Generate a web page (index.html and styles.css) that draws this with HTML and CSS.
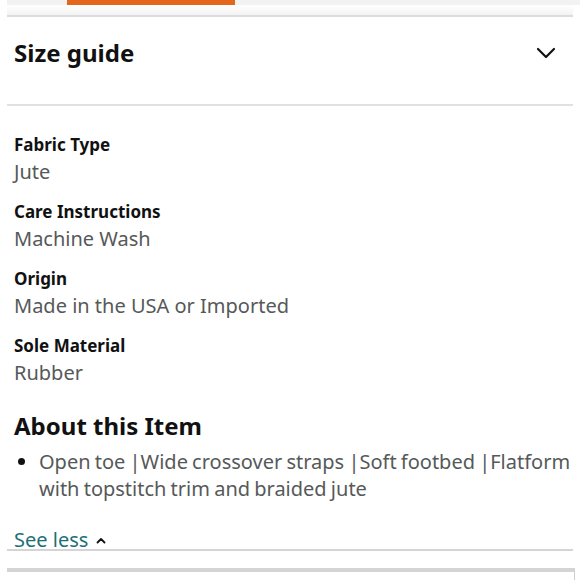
FILE: index.html
```html
<!DOCTYPE html>
<html>
<head>
<meta charset="utf-8">
<link rel="stylesheet" href="styles.css">
</head>
<body>
<div class="tabs">
  <div class="tab-active"></div>
</div>
<div class="top-rule"></div>
<div class="size-guide">
  <h2 class="sg-title">Size guide</h2>
  <svg class="chevron" width="20" height="12" viewBox="0 0 20 12"><path d="M2 2 L10 10 L18 2" fill="none" stroke="#111" stroke-width="2.2" stroke-linecap="round" stroke-linejoin="round"/></svg>
</div>
<div class="rule"></div>
<div class="specs">
  <div class="spec">
    <div class="spec-label">Fabric Type</div>
    <div class="spec-value">Jute</div>
  </div>
  <div class="spec">
    <div class="spec-label">Care Instructions</div>
    <div class="spec-value">Machine Wash</div>
  </div>
  <div class="spec">
    <div class="spec-label">Origin</div>
    <div class="spec-value">Made in the USA or Imported</div>
  </div>
  <div class="spec">
    <div class="spec-label">Sole Material</div>
    <div class="spec-value">Rubber</div>
  </div>
</div>
<h2 class="about-title">About this Item</h2>
<ul class="about-list">
  <li>Open toe |Wide crossover straps |Soft footbed |Flatform with topstitch trim and braided jute</li>
</ul>
<div class="see-less">See less <svg class="caret" width="10" height="7" viewBox="0 0 10 7"><path d="M1.5 5.5 L5 2 L8.5 5.5" fill="none" stroke="#111" stroke-width="1.8" stroke-linecap="round" stroke-linejoin="round"/></svg></div>
<div class="rule thin"></div>
<div class="next-card"></div>
</body>
</html>
```
FILE: styles.css
```css
html, body {
  margin: 0;
  padding: 0;
  background: #fff;
  width: 580px;
  height: 580px;
  overflow: hidden;
  font-family: "Noto Sans", "Open Sans", sans-serif;
  color: #111;
}
.tabs {
  height: 5px;
  background: #f2f2f2;
  margin-left: 7px;
  display: flex;
}
.tab-active {
  margin-left: 60px;
  width: 168px;
  height: 5px;
  background: #e3661c;
}
.top-rule {
  height: 12px;
  margin: 0 7px;
  background: linear-gradient(#ffffff, #f3f3f3);
  border-bottom: 2px solid #dcdcdc;
  box-sizing: border-box;
}
.size-guide {
  display: flex;
  align-items: center;
  justify-content: space-between;
  padding: 20px 24px 35px 14px;
}
.sg-title {
  margin: 0;
  font-size: 24px;
  font-weight: 700;
  line-height: 32px;
}
.chevron {
  display: block;
}
.rule {
  height: 2px;
  margin: 0 7px;
  background: #e0e0e0;
}
.specs {
  padding: 25px 14px 0;
}
.spec {
  margin-bottom: 13px;
}
.spec-label {
  font-size: 17px;
  font-weight: 700;
  line-height: 27px;
}
.spec-value {
  font-size: 20px;
  line-height: 27px;
  color: #565959;
}
.about-title {
  margin: 24px 14px 6px;
  font-size: 24px;
  font-weight: 700;
  line-height: 32px;
}
.about-list {
  margin: 0;
  padding: 0 0 0 39px;
  font-size: 20px;
  line-height: 27px;
  color: #565959;
  word-spacing: -1px;
}
.about-list li::marker {
  color: #111;
}
.see-less {
  margin: 28px 14px 0;
  font-size: 20px;
  line-height: 20px;
  color: #1d6f76;
  display: flex;
  align-items: center;
  gap: 8px;
}
.rule.thin {
  margin-top: -1px;
  background: #d5d5d5;
  height: 2px;
}
.next-card {
  margin: 17px 5px 0 7px;
  height: 20px;
  border-top: 4px solid #d4d4d4;
  border-right: 1px solid #cfcfcf;
}
```
